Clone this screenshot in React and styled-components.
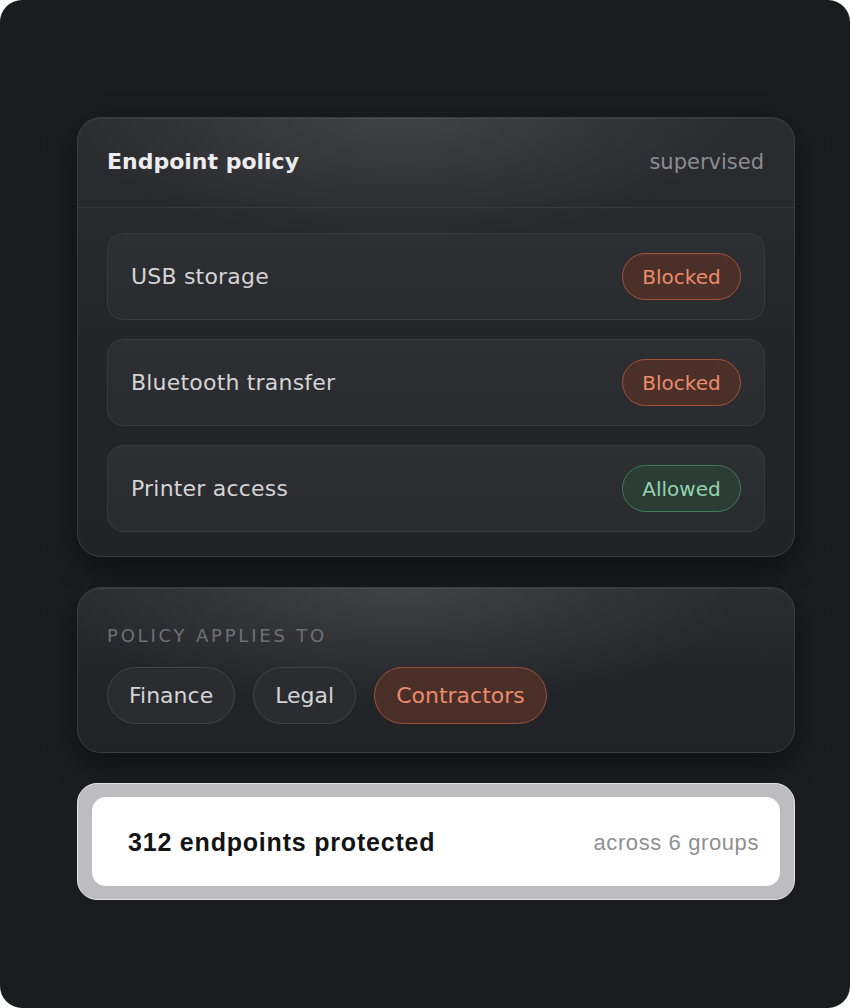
import React from "react";
import styled, { createGlobalStyle } from "styled-components";

const GlobalStyle = createGlobalStyle`
  html, body {
    margin: 0;
    padding: 0;
    background: #ffffff;
  }
  * {
    box-sizing: border-box;
  }
`;

const Frame = styled.div`
  width: 850px;
  height: 1008px;
  background: #1b1c1e;
  border-radius: 22px;
  padding: 117px 55px 0 77px;
  display: flex;
  flex-direction: column;
  gap: 30px;
  font-family: "DejaVu Sans", "Open Sans", sans-serif;
`;

const Card = styled.section`
  width: 718px;
  border-radius: 24px;
  border: 1.5px solid #3b3c40;
  background:
    radial-gradient(ellipse 340px 120px at 45% 0%, rgba(255, 255, 255, 0.1), rgba(255, 255, 255, 0) 100%),
    linear-gradient(180deg, #2b2c30 0%, #232427 60%, #222326 100%);
  box-shadow: 0 10px 30px rgba(0, 0, 0, 0.45), inset 0 1px 0 rgba(255, 255, 255, 0.06);
  overflow: hidden;
`;

const Header = styled.div`
  height: 90px;
  display: flex;
  align-items: center;
  justify-content: space-between;
  padding: 0 30px 2px 29px;
  border-bottom: 1.5px solid #37383c;
`;

const Title = styled.h1`
  margin: 0;
  font-size: 22px;
  font-weight: 700;
  color: #ececed;
`;

const Muted = styled.span`
  font-size: 21px;
  color: #8b8c90;
`;

const RowList = styled.div`
  display: flex;
  flex-direction: column;
  gap: 19px;
  padding: 25px 29px 24px;
`;

const Row = styled.div`
  height: 87px;
  border-radius: 16px;
  border: 1.5px solid #3a3b3f;
  background: linear-gradient(180deg, #2e2f33 0%, #2a2b2f 100%);
  display: flex;
  align-items: center;
  justify-content: space-between;
  padding: 0 23px 0 23px;
`;

const RowLabel = styled.span`
  font-size: 22px;
  letter-spacing: 0.2px;
  color: #d4d4d6;
`;

const Badge = styled.span`
  width: 119px;
  height: 47px;
  border-radius: 24px;
  display: flex;
  align-items: center;
  justify-content: center;
  font-size: 20px;
  border: 1.5px solid ${(p) => (p.$tone === "ok" ? "#3f7a5d" : "#a4533a")};
  background: ${(p) => (p.$tone === "ok" ? "#2b3d35" : "#4a3029")};
  color: ${(p) => (p.$tone === "ok" ? "#93d3b0" : "#ec8a6c")};
`;

const Scope = styled.div`
  padding: 37px 29px 28px;
  display: flex;
  flex-direction: column;
  gap: 21px;
`;

const Eyebrow = styled.div`
  font-size: 18px;
  letter-spacing: 2.8px;
  color: #6f7074;
`;

const Chips = styled.div`
  display: flex;
  gap: 18px;
`;

const Chip = styled.span`
  height: 57px;
  padding: 0 21px;
  border-radius: 29px;
  display: flex;
  align-items: center;
  font-size: 22px;
  border: 1.5px solid ${(p) => (p.$active ? "#9c4f39" : "#424347")};
  background: ${(p) => (p.$active ? "#4a2f28" : "#2b2c30")};
  color: ${(p) => (p.$active ? "#ec8a6c" : "#d4d4d6")};
`;

const Summary = styled.div`
  width: 718px;
  height: 117px;
  border-radius: 20px;
  border: 1.5px solid #e4e4e6;
  background: #bdbdbf;
  padding: 13px 14px;
`;

const SummaryInner = styled.div`
  height: 100%;
  border-radius: 14px;
  background: #ffffff;
  display: flex;
  align-items: center;
  justify-content: space-between;
  padding: 2px 21px 0 36px;
  font-family: "Liberation Sans", Arial, sans-serif;
`;

const Count = styled.span`
  font-size: 25px;
  font-weight: 700;
  letter-spacing: 0.8px;
  color: #141416;
`;

const Groups = styled.span`
  font-size: 22px;
  letter-spacing: 0.6px;
  color: #909093;
`;

const rules = [
  { name: "USB storage", state: "Blocked", tone: "bad" },
  { name: "Bluetooth transfer", state: "Blocked", tone: "bad" },
  { name: "Printer access", state: "Allowed", tone: "ok" },
];

const groups = [
  { name: "Finance" },
  { name: "Legal" },
  { name: "Contractors", active: true },
];

export default function App() {
  return (
    <>
      <GlobalStyle />
      <Frame>
        <Card>
          <Header>
            <Title>Endpoint policy</Title>
            <Muted>supervised</Muted>
          </Header>
          <RowList>
            {rules.map((r) => (
              <Row key={r.name}>
                <RowLabel>{r.name}</RowLabel>
                <Badge $tone={r.tone}>{r.state}</Badge>
              </Row>
            ))}
          </RowList>
        </Card>

        <Card>
          <Scope>
            <Eyebrow>POLICY APPLIES TO</Eyebrow>
            <Chips>
              {groups.map((g) => (
                <Chip key={g.name} $active={g.active}>
                  {g.name}
                </Chip>
              ))}
            </Chips>
          </Scope>
        </Card>

        <Summary>
          <SummaryInner>
            <Count>312 endpoints protected</Count>
            <Groups>across 6 groups</Groups>
          </SummaryInner>
        </Summary>
      </Frame>
    </>
  );
}
